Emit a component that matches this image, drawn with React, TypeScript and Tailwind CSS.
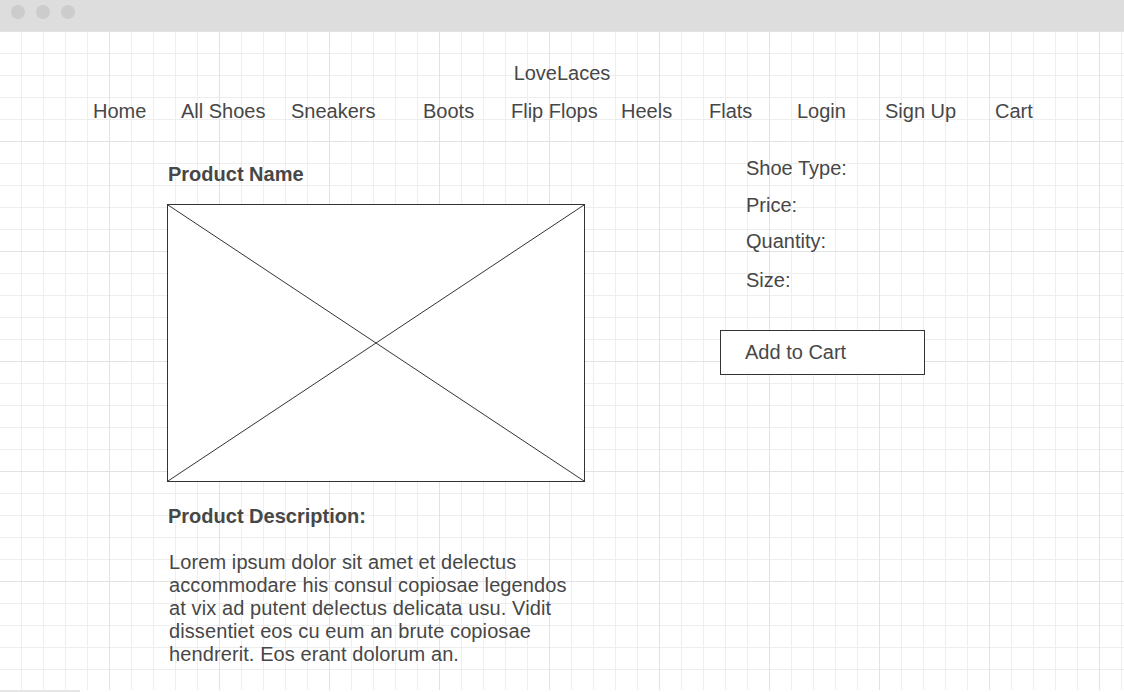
const navItems = [
  { label: "Home", width: "w-[88px]" },
  { label: "All Shoes", width: "w-[110px]" },
  { label: "Sneakers", width: "w-[132px]" },
  { label: "Boots", width: "w-[88px]" },
  { label: "Flip Flops", width: "w-[110px]" },
  { label: "Heels", width: "w-[88px]" },
  { label: "Flats", width: "w-[88px]" },
  { label: "Login", width: "w-[88px]" },
  { label: "Sign Up", width: "w-[110px]" },
  { label: "Cart", width: "w-[88px]" },
];

function ImagePlaceholder() {
  return (
    <div className="w-[418px] h-[278px] border border-[#333] bg-white">
      <svg width="416" height="276" viewBox="0 0 416 276" className="block">
        <line x1="0" y1="0" x2="416" y2="276" stroke="#333" strokeWidth="1" />
        <line x1="416" y1="0" x2="0" y2="276" stroke="#333" strokeWidth="1" />
      </svg>
    </div>
  );
}

export default function App() {
  return (
    <div className="w-[1124px] h-[692px] overflow-hidden bg-white text-[#474747] font-['Liberation_Sans',Arial,sans-serif]">
      {/* window chrome */}
      <div className="h-[31px] bg-[#dddddd] flex items-start pt-[5px] pl-[11px] gap-[11px]">
        <span className="w-[14px] h-[14px] rounded-full bg-[#cccccc]" />
        <span className="w-[14px] h-[14px] rounded-full bg-[#cccccc]" />
        <span className="w-[14px] h-[14px] rounded-full bg-[#cccccc]" />
      </div>

      <div className="h-[659px] bg-white bg-[linear-gradient(to_right,transparent_109px,#e2e2e2_109px),linear-gradient(to_bottom,#e2e2e2_1px,transparent_1px),linear-gradient(to_right,transparent_21px,#eeeeee_21px),linear-gradient(to_bottom,#eeeeee_1px,transparent_1px)] bg-[length:110px_110px,110px_110px,22px_22px,22px_22px]">
        <div className="pt-[31px] text-center text-[20px] leading-[22px]">LoveLaces</div>

        <nav className="mt-[16px] flex pl-[93px] text-[20px] leading-[22px]">
          {navItems.map((item) => (
            <div key={item.label} className={`${item.width} shrink-0`}>
              {item.label}
            </div>
          ))}
        </nav>

        <div className="mt-[35px] flex pl-[167px]">
          <div className="w-[418px] shrink-0 pt-[6px]">
            <div className="pl-[1px] text-[20px] leading-[22px] font-bold">Product Name</div>
            <div className="mt-[19px]">
              <ImagePlaceholder />
            </div>
            <div className="mt-[23px] pl-[1px] text-[20px] leading-[22px] font-bold">Product Description:</div>
            <p className="mt-[24px] pl-[2px] w-[407px] text-[20px] leading-[23px] tracking-[0.1px]">
              Lorem ipsum dolor sit amet et delectus accommodare his consul copiosae legendos at vix ad putent delectus
              delicata usu. Vidit dissentiet eos cu eum an brute copiosae hendrerit. Eos erant dolorum an.
            </p>
          </div>

          <div className="ml-[135px] text-[20px] leading-[22px]">
            <div className="pl-[26px]">
              <div>Shoe Type:</div>
              <div className="mt-[15px]">Price:</div>
              <div className="mt-[14px]">Quantity:</div>
              <div className="mt-[17px]">Size:</div>
            </div>
            <button className="mt-[39px] w-[205px] h-[45px] border border-[#333] bg-white text-left pl-[24px] pb-[2px] text-[20px] text-[#474747]">
              Add to Cart
            </button>
          </div>
        </div>
      </div>

      <div className="h-[2px] bg-white">
        <div className="w-[80px] h-[2px] bg-[#e6e6e6]" />
      </div>
    </div>
  );
}
